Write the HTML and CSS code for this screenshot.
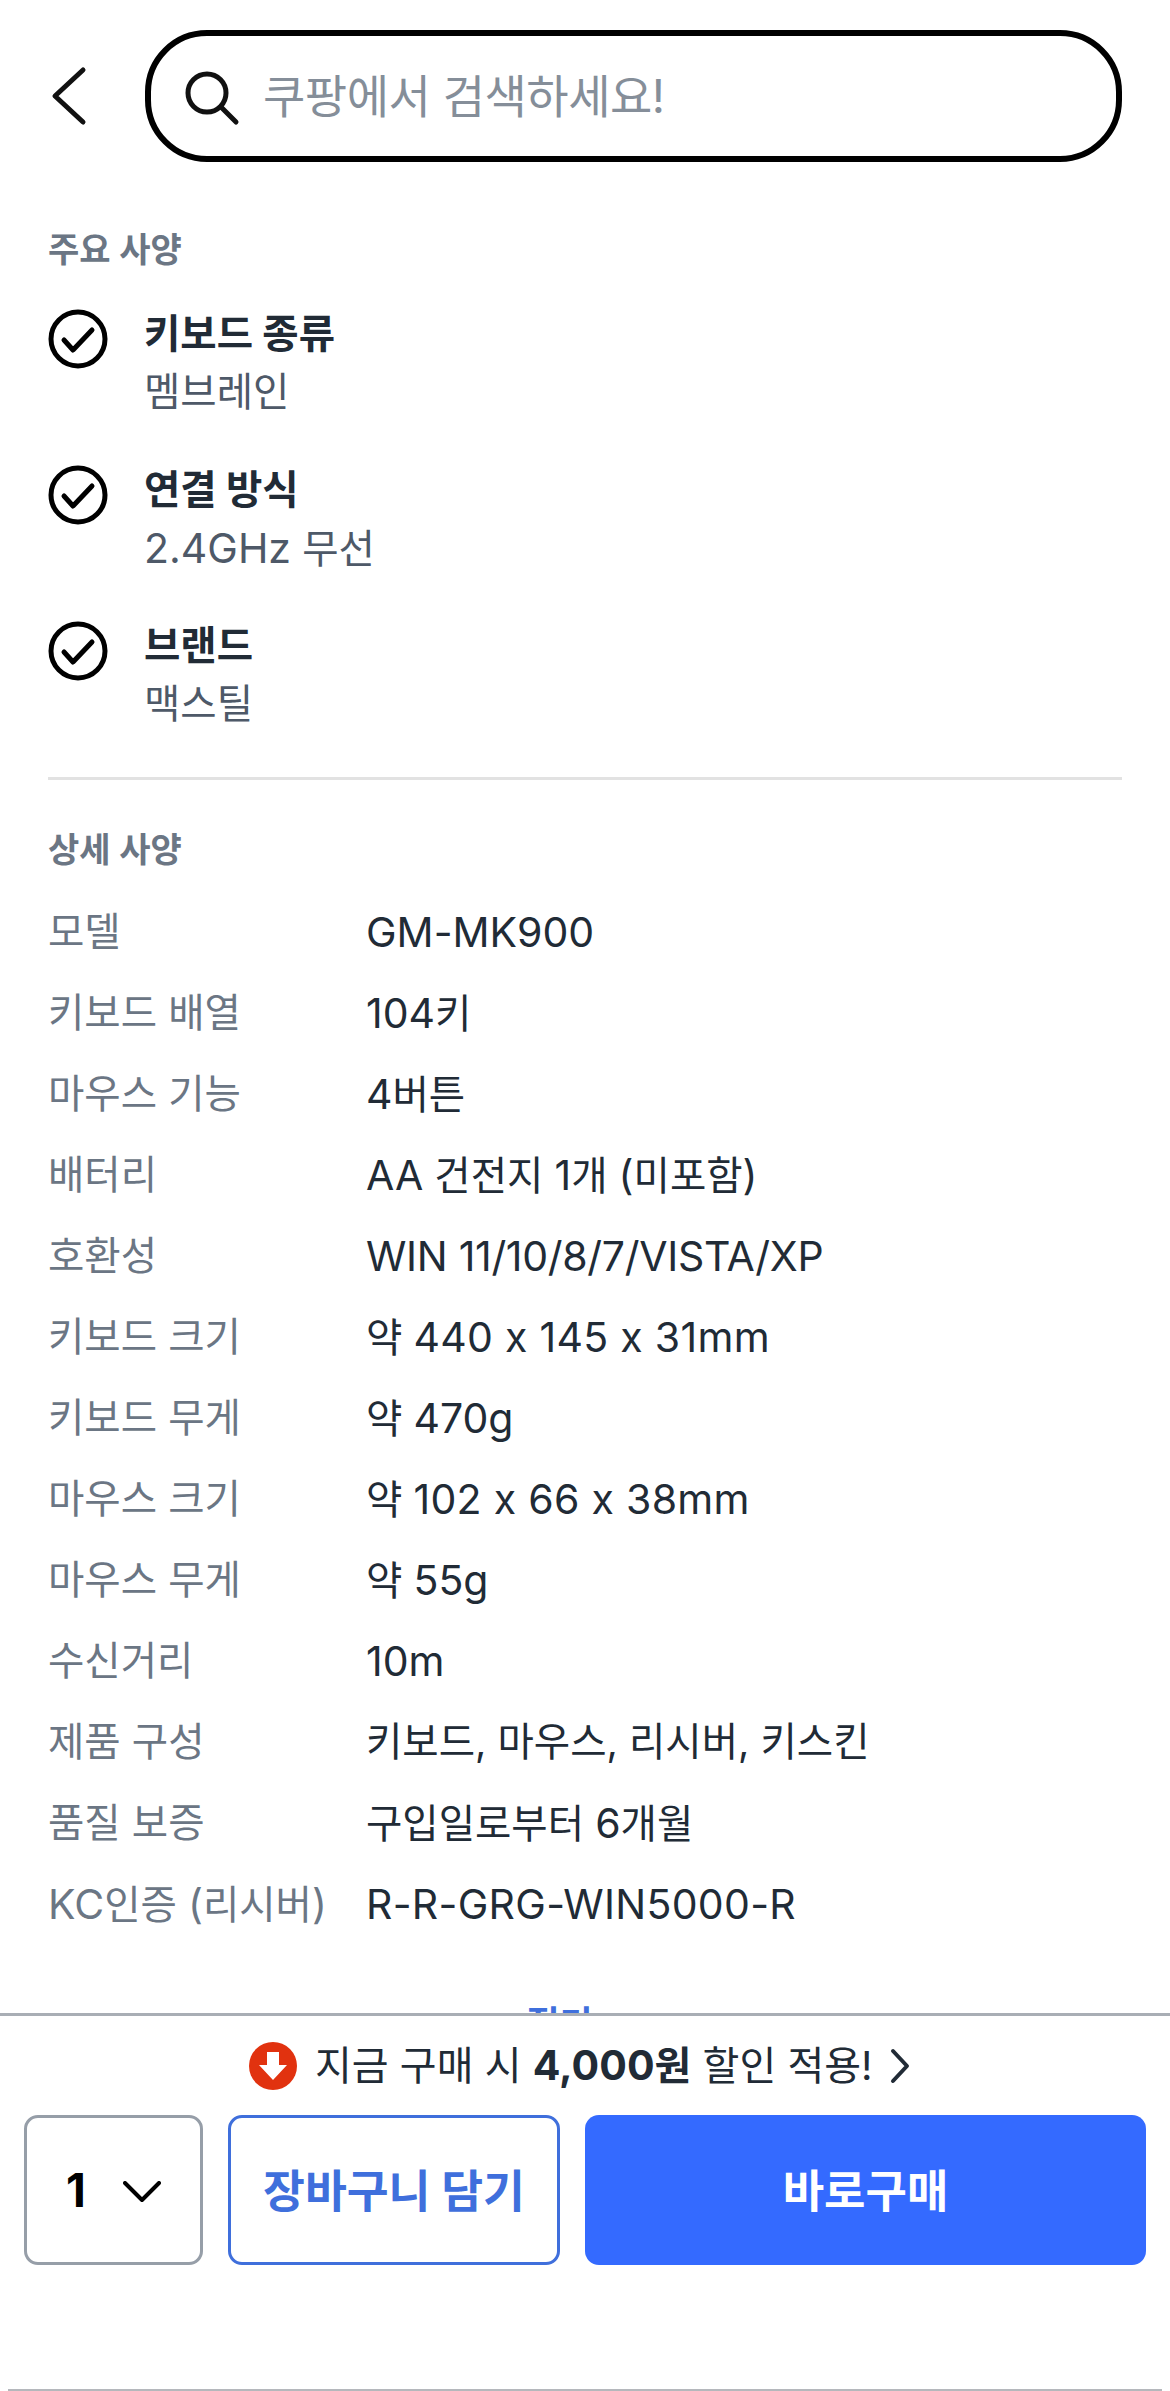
FILE: index.html
```html
<!DOCTYPE html>
<html lang="ko">
<head>
<meta charset="utf-8">
<title>상세 사양</title>
<link rel="stylesheet" href="styles.css">
</head>
<body>
<div class="page">
  <header class="topbar">
    <svg class="back" width="37" height="60" viewBox="0 0 37 60"><path d="M33 4 L5 30 L33 56" /></svg>
    <div class="search">
      <svg class="search-icon" width="60" height="60" viewBox="0 0 60 60"><circle cx="25" cy="25" r="19" /><path d="M39 39 L54 54" /></svg>
      <span class="placeholder">쿠팡에서 검색하세요!</span>
    </div>
  </header>

  <section class="main-spec">
    <h2 class="label">주요 사양</h2>
    <ul class="features">
      <li class="feature">
        <svg class="check" width="60" height="60" viewBox="0 0 60 60"><circle cx="30" cy="30" r="27" /><path d="M16 31 L25 41 L44 21" /></svg>
        <div><div class="f-title">키보드 종류</div><div class="f-desc">멤브레인</div></div>
      </li>
      <li class="feature">
        <svg class="check" width="60" height="60" viewBox="0 0 60 60"><circle cx="30" cy="30" r="27" /><path d="M16 31 L25 41 L44 21" /></svg>
        <div><div class="f-title">연결 방식</div><div class="f-desc"><span class="en">2.4GHz</span> 무선</div></div>
      </li>
      <li class="feature">
        <svg class="check" width="60" height="60" viewBox="0 0 60 60"><circle cx="30" cy="30" r="27" /><path d="M16 31 L25 41 L44 21" /></svg>
        <div><div class="f-title">브랜드</div><div class="f-desc">맥스틸</div></div>
      </li>
    </ul>
  </section>

  <section class="detail-spec">
    <h2 class="label">상세 사양</h2>
    <dl class="table">
      <dt>모델</dt><dd><span class="en">GM-MK900</span></dd>
      <dt>키보드 배열</dt><dd><span class="en">104</span>키</dd>
      <dt>마우스 기능</dt><dd><span class="en">4</span>버튼</dd>
      <dt>배터리</dt><dd><span class="en">AA</span> 건전지 <span class="en">1</span>개 <span class="en">(</span>미포함<span class="en">)</span></dd>
      <dt>호환성</dt><dd><span class="en tight">WIN 11/10/8/7/VISTA/XP</span></dd>
      <dt>키보드 크기</dt><dd>약 <span class="en wide">440 x 145 x 31mm</span></dd>
      <dt>키보드 무게</dt><dd>약 <span class="en">470g</span></dd>
      <dt>마우스 크기</dt><dd>약 <span class="en wide">102 x 66 x 38mm</span></dd>
      <dt>마우스 무게</dt><dd>약 <span class="en">55g</span></dd>
      <dt>수신거리</dt><dd><span class="en">10m</span></dd>
      <dt>제품 구성</dt><dd>키보드, 마우스, 리시버, 키스킨</dd>
      <dt>품질 보증</dt><dd>구입일로부터 <span class="en">6</span>개월</dd>
      <dt><span class="en">KC</span>인증 <span class="en">(</span>리시버<span class="en">)</span></dt><dd><span class="en wide">R-R-GRG-WIN5000-R</span></dd>
    </dl>
    <div class="fold">접기</div>
  </section>

  <footer class="buybar">
    <div class="promo">
      <svg class="promo-icon" width="48" height="48" viewBox="0 0 48 48"><circle cx="24" cy="24" r="24" /><path d="M18 10 H30 V23 H38 L24 38 L10 23 H18 Z" /></svg>
      <span class="promo-text">지금 구매 시 <b><span class="en">4,000</span>원</b> 할인 적용!</span>
      <svg class="promo-chevron" width="20" height="36" viewBox="0 0 20 36"><path d="M3 3 L17 18 L3 33" /></svg>
    </div>
    <div class="actions">
      <div class="qty">
        <span class="qty-num">1</span>
        <svg class="qty-chevron" width="38" height="22" viewBox="0 0 38 22"><path d="M2 2 L19 19 L36 2" /></svg>
      </div>
      <div class="cart">장바구니 담기</div>
      <div class="buy">바로구매</div>
    </div>
    <div class="home-line"></div>
  </footer>
</div>
</body>
</html>
```
FILE: styles.css
```css
* { box-sizing: border-box; }
html, body { margin: 0; padding: 0; background: #fff; }
body { font-family: Inter, "Noto Sans CJK KR", sans-serif; color: #212b36; font-feature-settings: "calt" 0; }
.page { position: relative; width: 1170px; height: 2391px; overflow: hidden; }
.en { font-size: 41px; }
.tight { letter-spacing: -0.3px; }
.wide { letter-spacing: 0.3px; }

.topbar { display: flex; align-items: center; gap: 58px; padding: 30px 48px 0 50px; height: 162px; }
.back { flex: none; }
.back path { fill: none; stroke: #111; stroke-width: 5; stroke-linecap: round; stroke-linejoin: round; }
.search { flex: 1; height: 132px; border: 6px solid #000; border-radius: 62px; display: flex; align-items: center; padding-left: 31px; gap: 21px; }
.search-icon { flex: none; margin-top: 4px; }
.search-icon circle, .search-icon path { fill: none; stroke: #111; stroke-width: 5; stroke-linecap: round; }
.placeholder { font-size: 46px; line-height: 60px; color: #858e99; letter-spacing: -0.5px; }

.main-spec { margin: 63px 48px 0; height: 555px; border-bottom: 3px solid #e2e2e2; }
.label { margin: 0; font-size: 34px; line-height: 50px; font-weight: 600; color: #6b7684; }
.features { list-style: none; margin: 30px 0 0; padding: 0; display: flex; flex-direction: column; gap: 40px; }
.feature { display: flex; gap: 36px; align-items: flex-start; height: 116px; }
.check { flex: none; margin-top: 4px; }
.check circle, .check path { fill: none; stroke: #000; stroke-width: 5; stroke-linecap: round; stroke-linejoin: round; }
.f-title { font-size: 39.5px; line-height: 58px; font-weight: 700; color: #212b36; }
.f-desc { font-size: 39.5px; line-height: 58px; color: #4e5968; }

.detail-spec { margin: 0 48px; padding-top: 45px; }
.table { margin: 17px 0 0; display: grid; grid-template-columns: 318px 1fr; grid-auto-rows: 81px; }
.table dt { font-size: 39.5px; line-height: 81px; height: 81px; color: #6b7684; white-space: nowrap; }
.table dd { margin: 0; font-size: 39.5px; line-height: 81px; height: 81px; color: #212b36; white-space: nowrap; }
.fold { margin-top: 54px; text-align: center; padding-right: 51px; font-size: 36px; line-height: 50px; font-weight: 700; color: #3f6fdc; }

.buybar { position: absolute; left: 0; right: 0; bottom: 0; height: 378px; background: #fff; border-top: 3px solid #a9aeb5; }
.promo { display: flex; align-items: center; height: 99px; padding-left: 249px; }
.promo-icon { flex: none; }
.promo-icon circle { fill: #e1320f; }
.promo-icon path { fill: #fff; }
.promo-text { margin-left: 18px; font-size: 40px; line-height: 60px; color: #212b36; white-space: nowrap; }
.promo-text b { font-weight: 700; }
.promo-chevron { margin-left: 17px; flex: none; }
.promo-chevron path { fill: none; stroke: #212b36; stroke-width: 4; stroke-linecap: round; stroke-linejoin: round; }

.actions { display: flex; gap: 25px; height: 150px; padding: 0 24px; }
.qty { width: 179px; border: 3px solid #969ea8; border-radius: 14px; display: flex; align-items: center; padding-left: 39px; gap: 37px; }
.qty-num { font-size: 46px; line-height: 60px; font-weight: 700; color: #000; }
.qty-chevron { flex: none; margin-top: 4px; }
.qty-chevron path { fill: none; stroke: #000; stroke-width: 4; stroke-linecap: round; stroke-linejoin: round; }
.cart { width: 332px; border: 3px solid #3f6fdc; border-radius: 14px; display: flex; align-items: center; justify-content: center; padding-bottom: 4px; font-size: 45.5px; font-weight: 700; color: #3f6fdc; }
.buy { flex: 1; background: #346aff; border-radius: 14px; display: flex; align-items: center; justify-content: center; padding-bottom: 4px; font-size: 45px; font-weight: 700; color: #fff; }
.home-line { margin: 124px 8px 0; height: 2px; background: #b5b8bc; }
```
